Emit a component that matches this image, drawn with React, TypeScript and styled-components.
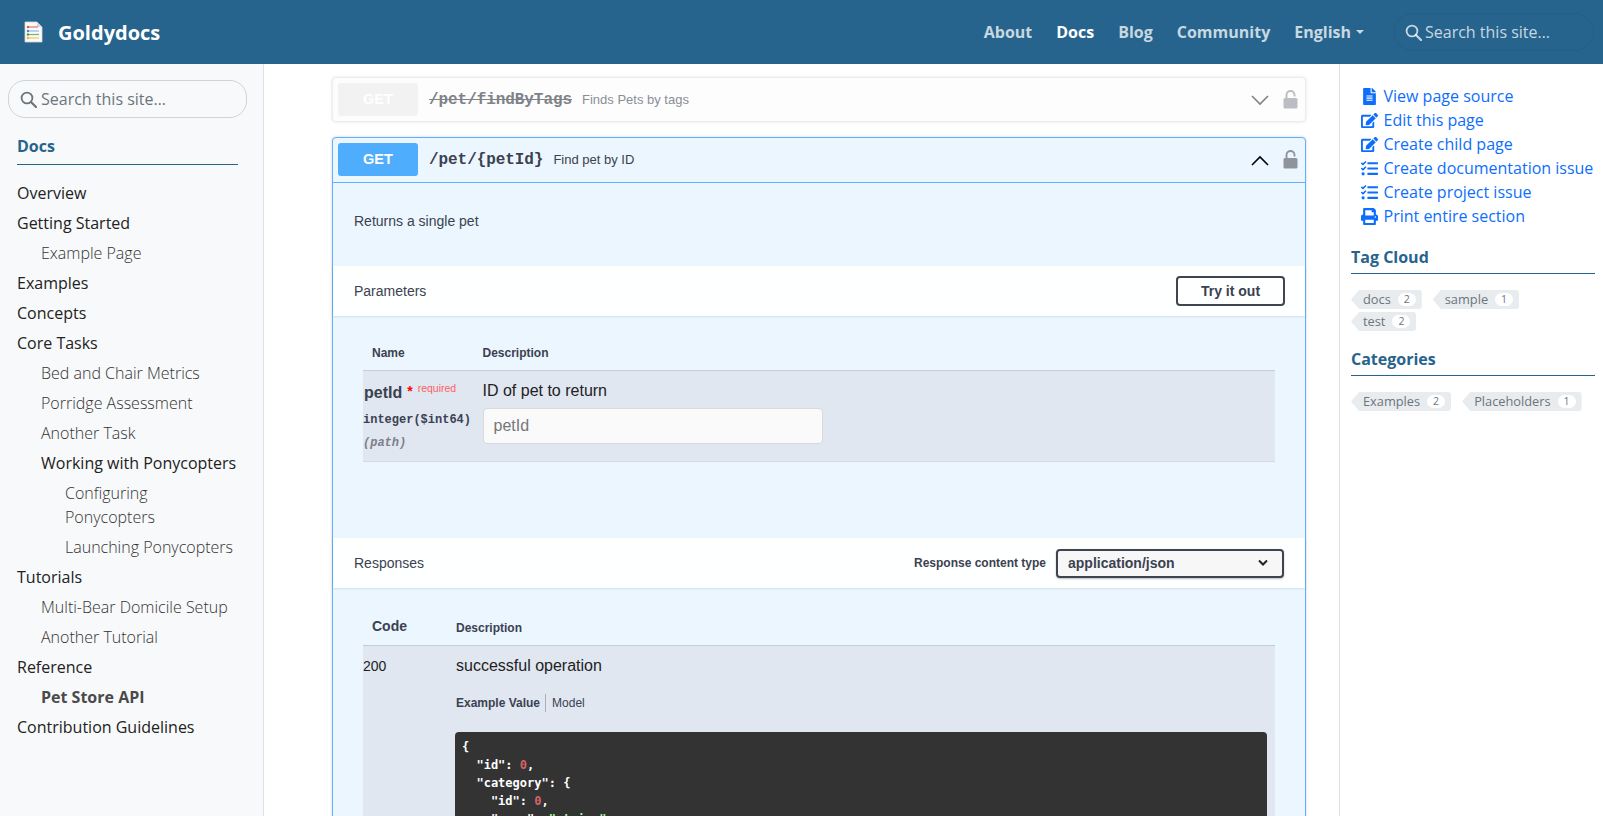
import React from "react";
import styled, { createGlobalStyle } from "styled-components";
import { FaFileAlt, FaEdit, FaTasks, FaPrint } from "react-icons/fa";

const Global = createGlobalStyle`
  * { box-sizing: border-box; }
  html, body { margin: 0; padding: 0; background: #fff; overflow: hidden; }
  body { font-family: "Open Sans", "Liberation Sans", sans-serif; color: #222; }
`;

const OPEN = `"Open Sans", "Noto Sans", sans-serif`;
const SANS = `"Liberation Sans", Arial, sans-serif`;
const SLAB = `"Liberation Mono", "Courier New", monospace`;
const CODE = `"DejaVu Sans Mono", monospace`;

const Page = styled.div`
  width: 1603px;
  height: 816px;
  overflow: hidden;
  display: flex;
  flex-direction: column;
`;

const Navbar = styled.header`
  height: 64px;
  flex: none;
  background: #26648d;
  display: flex;
  align-items: center;
  padding: 0 9px 0 24px;
`;
const Brand = styled.a`
  display: flex;
  align-items: center;
  gap: 15px;
  font: 700 20px ${OPEN};
  color: #fff;
  margin-right: auto;
`;
const NavLinks = styled.nav`
  display: flex;
  align-items: center;
  gap: 24px;
  margin-right: 30px;
`;
const NavLink = styled.a<{ $active?: boolean }>`
  font: 700 16px ${OPEN};
  color: ${(p) => (p.$active ? "#fff" : "rgba(255,255,255,.75)")};
  display: flex;
  align-items: center;
`;
const Caret = styled.span`
  width: 0;
  height: 0;
  margin-left: 5px;
  border-top: 4px solid rgba(255,255,255,.75);
  border-left: 4px solid transparent;
  border-right: 4px solid transparent;
`;
const NavSearch = styled.div`
  width: 200px;
  height: 38px;
  border: 1px solid rgba(0,0,0,.06);
  border-radius: 19px;
  display: flex;
  align-items: center;
  padding-left: 10px;
  gap: 3px;
  font: 400 16px ${OPEN};
  color: rgba(255,255,255,.75);
`;

const Body = styled.div`
  flex: 1;
  min-height: 0;
  display: flex;
`;

const Sidebar = styled.aside`
  width: 264px;
  flex: none;
  background: #f8f9fa;
  border-right: 1px solid #dee2e6;
  padding: 16px 8px 0;
`;
const SideSearch = styled.div`
  width: 239px;
  height: 38px;
  border: 1px solid #ced4da;
  border-radius: 17px;
  background: #f8f9fa;
  display: flex;
  align-items: center;
  gap: 4px;
  padding-left: 11px;
  font: 400 16px ${OPEN};
  color: #6c757d;
`;
const SideTitle = styled.div`
  margin: 16px 17px 0 9px;
  height: 31px;
  border-bottom: 1px solid #26648d;
  font: 700 16px/24px ${OPEN};
  color: #26648d;
`;
const SideList = styled.div`
  margin-top: 16px;
  padding-left: 9px;
  display: flex;
  flex-direction: column;
  gap: 5.8px;
`;
const SideItem = styled.a<{ $level?: number; $strong?: boolean; $dark?: boolean }>`
  padding-left: ${(p) => (p.$level ?? 0) * 24}px;
  width: ${(p) => ((p.$level ?? 0) === 2 ? "222px" : "auto")};
  font-family: ${OPEN};
  font-size: 16px;
  line-height: 24.2px;
  font-weight: ${(p) => (p.$strong ? 700 : p.$level && !p.$dark ? 300 : 400)};
  color: ${(p) => (p.$strong ? "#4a4a4a" : p.$level && !p.$dark ? "#333" : "#222")};
`;

const Main = styled.main`
  flex: 1;
  min-width: 0;
  padding: 13px 33px 0 68px;
`;

const Op = styled.section<{ $open?: boolean }>`
  border: 1px solid ${(p) => (p.$open ? "#61affe" : "#ededed")};
  border-radius: 4px;
  background: ${(p) => (p.$open ? "#ecf6ff" : "#fdfdfd")};
  box-shadow: 0 0 3px rgba(0,0,0,${(p) => (p.$open ? 0.19 : 0.12)});
  margin-bottom: 15px;
`;
const OpHead = styled.div<{ $open?: boolean }>`
  height: ${(p) => (p.$open ? "45px" : "43px")};
  display: flex;
  align-items: center;
  padding: 0 7px ${(p) => (p.$open ? "1px" : "0")} 5px;
  border-bottom: ${(p) => (p.$open ? "1px solid #61affe" : "none")};
`;
const Method = styled.span<{ $open?: boolean }>`
  width: 80px;
  height: 33px;
  border-radius: 3px;
  background: ${(p) => (p.$open ? "#4fadfe" : "#f2f2f2")};
  color: #fff;
  font: 700 14.5px/33px ${SANS};
  text-align: center;
  flex: none;
`;
const OpPath = styled.span<{ $off?: boolean }>`
  margin-left: 11px;
  font: 700 16px ${SLAB};
  letter-spacing: -0.07px;
  color: ${(p) => (p.$off ? "#7f8288" : "#3b4151")};
  text-decoration: ${(p) => (p.$off ? "line-through" : "none")};
`;
const OpSummary = styled.span<{ $off?: boolean }>`
  margin-left: 10px;
  font: 400 13px ${SANS};
  color: ${(p) => (p.$off ? "#8a8d96" : "#3b4151")};
  flex: 1;
`;
const OpIcons = styled.span<{ $off?: boolean }>`
  display: flex;
  align-items: center;
  gap: 14px;
  opacity: ${(p) => (p.$off ? 0.6 : 1)};
`;

const Desc = styled.div`
  height: 83px;
  padding: 30px 21px 0;
  font: 400 14px/17px ${SANS};
  color: #3b4151;
`;
const Bar = styled.div`
  height: 50px;
  background: rgba(255,255,255,.92);
  box-shadow: 0 1px 2px rgba(0,0,0,.1);
  display: flex;
  align-items: center;
  justify-content: space-between;
  padding: 0 20px 0 21px;
  font: 400 14px ${SANS};
  color: #3b4151;
`;
const TryBtn = styled.button`
  width: 109px;
  height: 30px;
  margin-right: 0;
  border: 2px solid #41444e;
  border-radius: 4px;
  background: transparent;
  font: 700 14px ${SANS};
  color: #3b4151;
`;
const TableWrap = styled.div<{ $h?: number }>`
  padding: 0 30px;
  height: ${(p) => (p.$h ? `${p.$h}px` : "auto")};
`;
const ParamHead = styled.div`
  height: 55px;
  display: grid;
  grid-template-columns: 119.5px 1fr;
  align-items: end;
  padding-bottom: 9px;
  border-bottom: 1px solid #c3ccd8;
  font: 700 12px/15px ${SANS};
  color: #3b4151;
`;
const NameCell = styled.span`
  padding-left: 9px;
`;
const ParamRow = styled.div`
  height: 91px;
  background: #e0e7f1;
  border-bottom: 1px solid #d5dbe5;
  display: grid;
  grid-template-columns: 119.5px 1fr;
  padding-top: 10px;
`;
const ParamName = styled.div`
  font: 700 16px/24px ${SANS};
  color: #3b4151;
  padding-left: 1px;
  white-space: nowrap;
`;
const Star = styled.span`
  color: #f00;
  font-size: 14px;
  margin-left: 5px;
  position: relative;
  top: -2px;
`;
const Required = styled.span`
  font: 400 10.5px ${SANS};
  color: #ff6060;
  margin-left: 5px;
  position: relative;
  top: -6px;
`;
const ParamType = styled.div`
  font: 700 12px/14px ${SLAB};
  color: #3b4151;
  margin-top: 8px;
`;
const ParamIn = styled.div`
  font: italic 700 12px/14px ${SLAB};
  color: #7c7f87;
  margin-top: 9px;
`;
const ParamDesc = styled.div`
  font: 400 16px/20px ${SANS};
  color: #222;
`;
const FakeInput = styled.div`
  width: 340px;
  height: 36px;
  margin-top: 7px;
  border: 1px solid #d9d9d9;
  border-radius: 4px;
  background: #fafafa;
  font: 400 16px/34px ${SANS};
  color: #777;
  padding-left: 10px;
`;
const SelectLabel = styled.span`
  font: 700 12px ${SANS};
  color: #3b4151;
  margin-right: 10px;
`;
const SelectGroup = styled.div`
  display: flex;
  align-items: center;
  margin-right: 1px;
`;
const Select = styled.div`
  width: 228px;
  height: 29px;
  border: 2px solid #41444e;
  border-radius: 4px;
  background: #f7f7f7;
  box-shadow: 0 1px 2px rgba(0,0,0,.25);
  display: flex;
  align-items: center;
  justify-content: space-between;
  padding: 0 13px 0 10px;
  font: 700 14px ${SANS};
  color: #3b4151;
`;
const RespHead = styled.div`
  height: 58px;
  display: grid;
  grid-template-columns: 93px 1fr;
  align-items: end;
  padding-bottom: 9px;
  border-bottom: 1px solid #c3ccd8;
  font: 700 12px/15px ${SANS};
  color: #3b4151;
`;
const CodeHead = styled.span`
  padding-left: 9px;
  font-size: 14px;
  line-height: 19px;
`;
const RespRow = styled.div`
  background: #e0e7f1;
  display: grid;
  grid-template-columns: 93px 1fr;
  height: 300px;
  padding: 9px 8px 0 0;
`;
const RespCode = styled.div`
  font: 400 14px/22px ${SANS};
  color: #222;
`;
const RespDesc = styled.div`
  font: 400 16px/22px ${SANS};
  color: #222;
`;
const Tabs = styled.div`
  margin-top: 17px;
  height: 18px;
  display: flex;
  align-items: center;
  font: 400 12px ${SANS};
  color: #3b4151;
`;
const TabActive = styled.span`
  font-weight: 700;
  padding-right: 5px;
  border-right: 1px solid #a9afba;
  line-height: 18px;
  margin-right: 6px;
`;
const CodeBlock = styled.div`
  margin: 20px 0 0 -1px;
  background: #333;
  border-radius: 4px;
  padding: 6px 7px;
  height: 200px;
`;
const CodeLine = styled.div<{ $indent?: number }>`
  font: 700 12px/18px ${CODE};
  color: #fff;
  white-space: pre;
  padding-left: ${(p) => (p.$indent ?? 0) * 7.22}px;
`;
const Num = styled.span`
  color: #d36363;
`;
const Str = styled.span`
  color: #a2fca2;
`;

const Aside = styled.aside`
  width: 264px;
  flex: none;
  border-left: 1px solid #dee2e6;
  padding: 20px 8px 0 11px;
`;
const ActionLink = styled.a`
  display: flex;
  align-items: center;
  height: 24px;
  padding-left: 10px;
  font: 400 16px ${OPEN};
  color: #0d6efd;
  white-space: nowrap;
`;
const ActionIcon = styled.span`
  width: 22.5px;
  flex: none;
  display: flex;
  align-items: center;
  font-size: 17px;
`;
const PanelTitle = styled.div<{ $first?: boolean }>`
  margin-top: ${(p) => (p.$first ? "16px" : "15px")};
  height: 30px;
  border-bottom: 1px solid #26648d;
  font: 700 16px/27px ${OPEN};
  color: #26648d;
`;
const Tags = styled.div`
  margin-top: 16px;
  padding-right: 10px;
  display: flex;
  flex-wrap: wrap;
  column-gap: 11px;
  row-gap: 3px;
`;
const Tag = styled.a`
  height: 19px;
  display: flex;
  align-items: center;
  padding: 0 6px 1px 12px;
  border-radius: 0 3px 3px 0;
  background: #e9ecef;
  clip-path: polygon(8px 0, 100% 0, 100% 100%, 8px 100%, 0 50%);
  font: 400 12.8px ${OPEN};
  color: #6c757d;
`;
const Count = styled.span`
  margin-left: 7px;
  width: 18px;
  height: 13px;
  border-radius: 7px;
  background: #fff;
  font: 400 10.5px/13px ${OPEN};
  color: #6c757d;
  text-align: center;
`;

const SearchGlyph = ({ color, size = 17 }: { color: string; size?: number }) => (
  <svg width={size} height={size} viewBox="0 0 17 17" fill="none" stroke={color}>
    <circle cx="7" cy="7" r="5.4" strokeWidth="1.8" />
    <path d="M11 11l5 5" strokeWidth="2.2" strokeLinecap="round" />
  </svg>
);

const Logo = () => (
  <svg width="19" height="22" viewBox="0 0 19 22">
    <path d="M1 1h12l5 5v15H1z" fill="#fafafa" stroke="#d8d4c8" strokeWidth=".8" />
    <path d="M13 1v5h5z" fill="#d5d5d5" />
    <path d="M5 6h9" stroke="#e8736b" strokeWidth="1.2" />
    <circle cx="4" cy="6" r="1.2" fill="#d9534f" />
    <path d="M5 10h10" stroke="#8fb6e8" strokeWidth="1.2" />
    <circle cx="4" cy="10" r="1.2" fill="#4a7fd0" />
    <path d="M5 13.500h10" stroke="#6dbb6d" strokeWidth="1.2" />
    <circle cx="4" cy="13.500" r="1.2" fill="#3f9b4f" />
    <path d="M5 17h10" stroke="#f4c95d" strokeWidth="1.2" />
    <circle cx="4" cy="17" r="1.2" fill="#f0b429" />
  </svg>
);

const Chevron = ({ up, color }: { up?: boolean; color: string }) => (
  <svg width="18" height="12" viewBox="0 0 18 12" fill="none" stroke={color} strokeWidth="1.6">
    <path d={up ? "M1 11l8-8 8 8" : "M1 2l8 8 8-8"} />
  </svg>
);

const Lock = () => (
  <svg width="15" height="19" viewBox="0 0 15 19">
    <path d="M3.500 9V5a4 4 0 0 1 8 0v1.500" fill="none" stroke="#8f949c" strokeWidth="1.900" />
    <rect x=".5" y="8" width="14" height="10.500" rx="1.500" fill="#8f949c" />
  </svg>
);

const SmallChevron = () => (
  <svg width="12" height="8" viewBox="0 0 12 8" fill="none" stroke="#222" strokeWidth="2">
    <path d="M2 1.500l4 4 4-4" />
  </svg>
);

type NavItem = { label: string; level?: number; strong?: boolean; dark?: boolean };
const navItems: NavItem[] = [
  { label: "Overview" },
  { label: "Getting Started" },
  { label: "Example Page", level: 1 },
  { label: "Examples" },
  { label: "Concepts" },
  { label: "Core Tasks" },
  { label: "Bed and Chair Metrics", level: 1 },
  { label: "Porridge Assessment", level: 1 },
  { label: "Another Task", level: 1 },
  { label: "Working with Ponycopters", level: 1, dark: true },
  { label: "Configuring Ponycopters", level: 2 },
  { label: "Launching Ponycopters", level: 2 },
  { label: "Tutorials" },
  { label: "Multi-Bear Domicile Setup", level: 1 },
  { label: "Another Tutorial", level: 1 },
  { label: "Reference" },
  { label: "Pet Store API", level: 1, strong: true },
  { label: "Contribution Guidelines" },
];

const actions = [
  { icon: <FaFileAlt />, label: "View page source" },
  { icon: <FaEdit />, label: "Edit this page" },
  { icon: <FaEdit />, label: "Create child page" },
  { icon: <FaTasks />, label: "Create documentation issue" },
  { icon: <FaTasks />, label: "Create project issue" },
  { icon: <FaPrint />, label: "Print entire section" },
];

const TagRow = ({ items }: { items: [string, number][] }) => (
  <Tags>
    {items.map(([t, n]) => (
      <Tag key={t}>
        {t}
        <Count>{n}</Count>
      </Tag>
    ))}
  </Tags>
);

export default function App() {
  return (
    <Page>
      <Global />
      <Navbar>
        <Brand>
          <Logo />
          Goldydocs
        </Brand>
        <NavLinks>
          <NavLink>About</NavLink>
          <NavLink $active>Docs</NavLink>
          <NavLink>Blog</NavLink>
          <NavLink>Community</NavLink>
          <NavLink>
            English
            <Caret />
          </NavLink>
        </NavLinks>
        <NavSearch>
          <SearchGlyph color="rgba(255,255,255,.75)" />
          Search this site…
        </NavSearch>
      </Navbar>
      <Body>
        <Sidebar>
          <SideSearch>
            <SearchGlyph color="#6c757d" />
            Search this site…
          </SideSearch>
          <SideTitle>Docs</SideTitle>
          <SideList>
            {navItems.map((n) => (
              <SideItem key={n.label} $level={n.level} $strong={n.strong} $dark={n.dark}>
                {n.label}
              </SideItem>
            ))}
          </SideList>
        </Sidebar>
        <Main>
          <Op>
            <OpHead>
              <Method>GET</Method>
              <OpPath $off>/pet/findByTags</OpPath>
              <OpSummary $off>Finds Pets by tags</OpSummary>
              <OpIcons $off>
                <Chevron color="#333" />
                <Lock />
              </OpIcons>
            </OpHead>
          </Op>
          <Op $open>
            <OpHead $open>
              <Method $open>GET</Method>
              <OpPath>/pet/{"{petId}"}</OpPath>
              <OpSummary>Find pet by ID</OpSummary>
              <OpIcons>
                <Chevron up color="#000" />
                <Lock />
              </OpIcons>
            </OpHead>
            <Desc>Returns a single pet</Desc>
            <Bar>
              Parameters
              <TryBtn>Try it out</TryBtn>
            </Bar>
            <TableWrap $h={222}>
              <ParamHead>
                <NameCell>Name</NameCell>
                <span>Description</span>
              </ParamHead>
              <ParamRow>
                <div>
                  <ParamName>
                    petId
                    <Star>*</Star>
                    <Required>required</Required>
                  </ParamName>
                  <ParamType>integer($int64)</ParamType>
                  <ParamIn>(path)</ParamIn>
                </div>
                <div>
                  <ParamDesc>ID of pet to return</ParamDesc>
                  <FakeInput>petId</FakeInput>
                </div>
              </ParamRow>
            </TableWrap>
            <Bar>
              Responses
              <SelectGroup>
                <SelectLabel>Response content type</SelectLabel>
                <Select>
                  application/json
                  <SmallChevron />
                </Select>
              </SelectGroup>
            </Bar>
            <TableWrap>
              <RespHead>
                <CodeHead>Code</CodeHead>
                <span>Description</span>
              </RespHead>
              <RespRow>
                <RespCode>200</RespCode>
                <div>
                  <RespDesc>successful operation</RespDesc>
                  <Tabs>
                    <TabActive>Example Value</TabActive>
                    Model
                  </Tabs>
                  <CodeBlock>
                    <CodeLine>{"{"}</CodeLine>
                    <CodeLine $indent={2}>
                      {'"id": '}
                      <Num>0</Num>,
                    </CodeLine>
                    <CodeLine $indent={2}>{'"category": {'}</CodeLine>
                    <CodeLine $indent={4}>
                      {'"id": '}
                      <Num>0</Num>,
                    </CodeLine>
                    <CodeLine $indent={4}>
                      {'"name": '}
                      <Str>"string"</Str>
                    </CodeLine>
                  </CodeBlock>
                </div>
              </RespRow>
            </TableWrap>
          </Op>
        </Main>
        <Aside>
          {actions.map((a) => (
            <ActionLink key={a.label}>
              <ActionIcon>{a.icon}</ActionIcon>
              {a.label}
            </ActionLink>
          ))}
          <PanelTitle $first>Tag Cloud</PanelTitle>
          <TagRow items={[["docs", 2], ["sample", 1], ["test", 2]]} />
          <PanelTitle>Categories</PanelTitle>
          <TagRow items={[["Examples", 2], ["Placeholders", 1]]} />
        </Aside>
      </Body>
    </Page>
  );
}
